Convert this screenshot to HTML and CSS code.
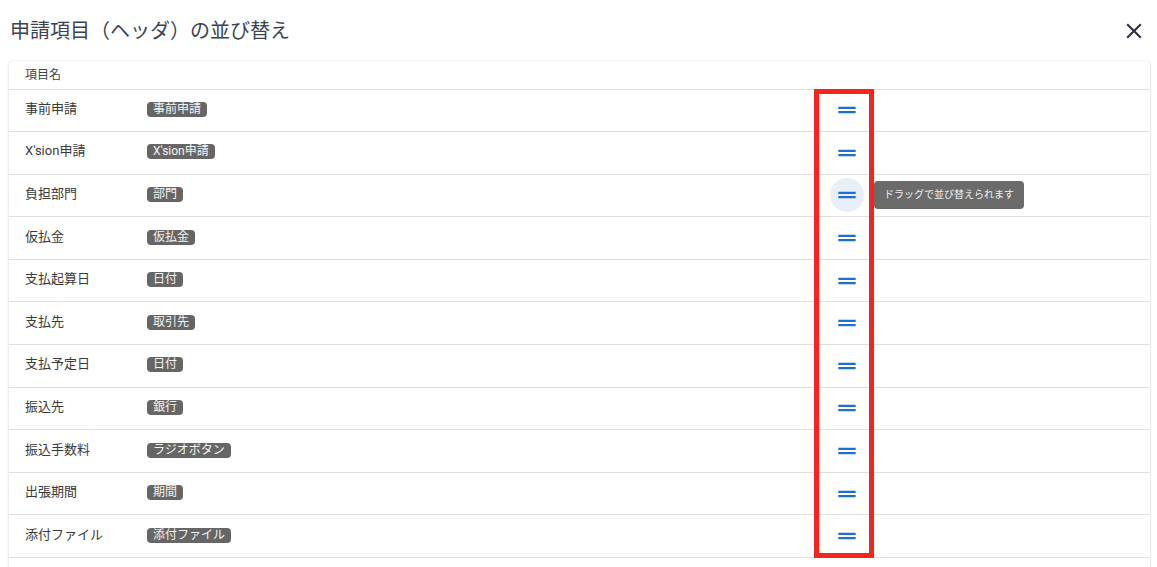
FILE: index.html
```html
<!DOCTYPE html>
<html lang="ja">
<head>
<meta charset="utf-8">
<title>申請項目（ヘッダ）の並び替え</title>
<link rel="stylesheet" href="styles.css">
</head>
<body>
<header class="dialog-head">
  <h1 class="dialog-title">申請項目（ヘッダ）の並び替え</h1>
  <button class="close-btn" aria-label="閉じる">
    <svg viewBox="0 0 24 24" width="26" height="26"><path fill="currentColor" d="M19 6.41L17.59 5 12 10.59 6.41 5 5 6.41 10.59 12 5 17.59 6.41 19 12 13.41 17.59 19 19 17.59 13.41 12z"/></svg>
  </button>
</header>
<main class="card">
  <div class="row head-row"><span class="name">項目名</span></div>
  <div class="row"><span class="name">事前申請</span><span class="chip-cell"><span class="chip">事前申請</span></span><span class="handle"><svg viewBox="0 0 24 24" width="26" height="26"><path fill="currentColor" d="M20 9H4v2h16V9zM4 15h16v-2H4v2z"/></svg></span></div>
  <div class="row"><span class="name">X'sion申請</span><span class="chip-cell"><span class="chip">X'sion申請</span></span><span class="handle"><svg viewBox="0 0 24 24" width="26" height="26"><path fill="currentColor" d="M20 9H4v2h16V9zM4 15h16v-2H4v2z"/></svg></span></div>
  <div class="row"><span class="name">負担部門</span><span class="chip-cell"><span class="chip">部門</span></span><span class="handle hover"><svg viewBox="0 0 24 24" width="26" height="26"><path fill="currentColor" d="M20 9H4v2h16V9zM4 15h16v-2H4v2z"/></svg><span class="tooltip">ドラッグで並び替えられます</span></span></div>
  <div class="row"><span class="name">仮払金</span><span class="chip-cell"><span class="chip">仮払金</span></span><span class="handle"><svg viewBox="0 0 24 24" width="26" height="26"><path fill="currentColor" d="M20 9H4v2h16V9zM4 15h16v-2H4v2z"/></svg></span></div>
  <div class="row"><span class="name">支払起算日</span><span class="chip-cell"><span class="chip">日付</span></span><span class="handle"><svg viewBox="0 0 24 24" width="26" height="26"><path fill="currentColor" d="M20 9H4v2h16V9zM4 15h16v-2H4v2z"/></svg></span></div>
  <div class="row"><span class="name">支払先</span><span class="chip-cell"><span class="chip">取引先</span></span><span class="handle"><svg viewBox="0 0 24 24" width="26" height="26"><path fill="currentColor" d="M20 9H4v2h16V9zM4 15h16v-2H4v2z"/></svg></span></div>
  <div class="row"><span class="name">支払予定日</span><span class="chip-cell"><span class="chip">日付</span></span><span class="handle"><svg viewBox="0 0 24 24" width="26" height="26"><path fill="currentColor" d="M20 9H4v2h16V9zM4 15h16v-2H4v2z"/></svg></span></div>
  <div class="row"><span class="name">振込先</span><span class="chip-cell"><span class="chip">銀行</span></span><span class="handle"><svg viewBox="0 0 24 24" width="26" height="26"><path fill="currentColor" d="M20 9H4v2h16V9zM4 15h16v-2H4v2z"/></svg></span></div>
  <div class="row"><span class="name">振込手数料</span><span class="chip-cell"><span class="chip">ラジオボタン</span></span><span class="handle"><svg viewBox="0 0 24 24" width="26" height="26"><path fill="currentColor" d="M20 9H4v2h16V9zM4 15h16v-2H4v2z"/></svg></span></div>
  <div class="row"><span class="name">出張期間</span><span class="chip-cell"><span class="chip">期間</span></span><span class="handle"><svg viewBox="0 0 24 24" width="26" height="26"><path fill="currentColor" d="M20 9H4v2h16V9zM4 15h16v-2H4v2z"/></svg></span></div>
  <div class="row"><span class="name">添付ファイル</span><span class="chip-cell"><span class="chip">添付ファイル</span></span><span class="handle"><svg viewBox="0 0 24 24" width="26" height="26"><path fill="currentColor" d="M20 9H4v2h16V9zM4 15h16v-2H4v2z"/></svg></span></div>
  <div class="highlight-box" aria-hidden="true"></div>
</main>
</body>
</html>
```
FILE: styles.css
```css
* { box-sizing: border-box; }
body {
  margin: 0;
  background: #fff;
  font-family: Roboto, "Noto Sans CJK JP", sans-serif;
  color: #3a3a3a;
}
.dialog-head {
  height: 61px;
  display: flex;
  align-items: center;
  justify-content: space-between;
  padding: 0 10px 0 10px;
}
.dialog-title {
  margin: 0;
  font-size: 20px;
  font-weight: 400;
  line-height: 28px;
  color: #3a4552;
}
.close-btn {
  border: 0;
  background: none;
  padding: 0;
  width: 26px;
  height: 26px;
  color: #2b3440;
  display: flex;
}
.card {
  position: relative;
  margin: 0 7px 0 9px;
  border-radius: 4px;
  background: #fff;
  box-shadow: 0 1px 3px rgba(0,0,0,0.18), 0 0 1px rgba(0,0,0,0.12);
  padding-bottom: 30px;
}
.row {
  display: grid;
  grid-template-columns: 122px 683px 34px 1fr;
  align-items: center;
  height: 42.6px;
  padding-left: 16px;
  border-bottom: 1px solid #e0e0e0;
  font-size: 13px;
  line-height: 16px;
}
.row .name { padding-bottom: 3px; }
.head-row {
  height: 28.5px;
  font-size: 12px;
  color: #444;
}
.head-row .name { padding-bottom: 0; padding-top: 1px; }
.name { white-space: nowrap; }
.chip-cell { display: flex; align-items: center; padding-bottom: 2px; }
.chip {
  display: inline-block;
  background: #666;
  color: #f4f4f4;
  font-size: 12px;
  line-height: 15px;
  padding: 0 6px;
  border-radius: 4px;
}
.handle {
  position: relative;
  width: 34px;
  height: 34px;
  border-radius: 50%;
  display: flex;
  align-items: center;
  justify-content: center;
  color: #1f6fcf;
}
.handle.hover { background: #e8eff9; }
.tooltip {
  position: absolute;
  left: 44px;
  top: 50%;
  transform: translateY(-50%);
  background: #6b6b6b;
  color: #f0f0f0;
  font-size: 10px;
  line-height: 28px;
  padding: 0 10px;
  border-radius: 4px;
  white-space: nowrap;
}
.highlight-box {
  position: absolute;
  left: 805px;
  top: 28px;
  width: 60px;
  height: 469px;
  border: 5px solid #f5241c;
  pointer-events: none;
}
```
